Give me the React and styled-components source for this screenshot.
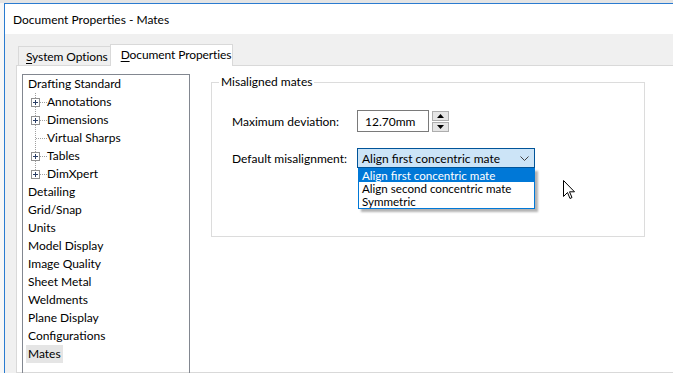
import React from 'react';
import styled, { createGlobalStyle } from 'styled-components';

const Global = createGlobalStyle`
  html, body { margin: 0; padding: 0; background: #fff; }
  body {
    font-family: Lato, "Noto Sans", sans-serif;
    font-size: 12px;
    color: #000;
  }
  * { box-sizing: border-box; }
`;

const Screen = styled.div`
  position: relative;
  width: 673px;
  height: 373px;
  overflow: hidden;
  display: flex;
  flex-direction: column;
  background: #fff;
`;

const TopBand = styled.div`
  height: 3px;
  flex: none;
  background: #e4e4e4;
`;

const Desk = styled.div`
  flex: 1;
  display: flex;
  padding-left: 4px;
  background: #f7f7f7;
  min-height: 0;
`;

const Window = styled.div`
  flex: 1;
  display: flex;
  flex-direction: column;
  border-left: 1px solid #2a7bd0;
  border-top: 1px solid #2a7bd0;
  min-height: 0;
`;

const TitleBar = styled.div`
  height: 30px;
  flex: none;
  display: flex;
  align-items: center;
  padding-left: 8px;
  background: #fff;
  font-size: 12px;
  color: #000;
`;

const Body = styled.div`
  flex: 1;
  display: flex;
  flex-direction: column;
  background: #f0f0f0;
  padding: 10px 0 0 11px;
  min-height: 0;
`;

const TabRow = styled.div`
  display: flex;
  align-items: flex-end;
  height: 21px;
  padding-left: 2px;
  flex: none;
`;

const Tab = styled.div`
  position: relative;
  z-index: 1;
  display: flex;
  align-items: center;
  height: ${p => (p.$active ? '22px' : '19px')};
  margin-bottom: ${p => (p.$active ? '-1px' : '0')};
  margin-left: ${p => (p.$active ? '-1px' : '0')};
  padding: ${p => (p.$active ? '0 1px 2px 10px' : '0 2px 0 7px')};
  background: ${p => (p.$active ? '#fff' : '#f0f0f0')};
  border: 1px solid #d9d9d9;
  border-bottom: none;
  white-space: nowrap;
  letter-spacing: -0.1px;
`;

const Ul = styled.span`
  text-decoration: underline;
  text-underline-offset: 2px;
`;

const Panel = styled.div`
  flex: 1;
  display: flex;
  align-items: flex-start;
  gap: 21px;
  background: #fff;
  border: 1px solid #d9d9d9;
  border-right: none;
  padding: 8px 0 0 5px;
  min-height: 0;
`;

const Tree = styled.div`
  width: 168px;
  height: 330px;
  flex: none;
  border: 1px solid #828790;
  padding: 0 0 0 5px;
  display: flex;
  flex-direction: column;
`;

const TreeRow = styled.div`
  height: 18px;
  display: flex;
  align-items: center;
  white-space: nowrap;
`;

const TreeLabel = styled.span`
  line-height: 18px;
  margin-left: ${p => (p.$selected ? '-2px' : '0')};
  padding: ${p => (p.$selected ? '0 2px' : '0')};
  background: ${p => (p.$selected ? '#e5e5e5' : 'transparent')};
`;

const Connector = ({ expandable, last }) => (
  <svg width="19" height="18" viewBox="0 0 19 18" style={{ flex: 'none' }}>
    <line x1="7.5" y1="0" x2="7.5" y2={last ? 9 : 18} stroke="#a0a0a0" strokeDasharray="1 1" />
    <line x1={expandable ? 12 : 8} y1="9.5" x2="19" y2="9.5" stroke="#a0a0a0" strokeDasharray="1 1" />
    {expandable && (
      <g>
        <rect x="3.5" y="5.5" width="8" height="8" fill="#fff" stroke="#919191" />
        <line x1="5" y1="9.5" x2="10" y2="9.5" stroke="#2b3f66" />
        <line x1="7.5" y1="7" x2="7.5" y2="12" stroke="#2b3f66" />
      </g>
    )}
  </svg>
);

const RightCol = styled.div`
  display: flex;
  flex-direction: column;
`;

const Group = styled.fieldset`
  width: 434px;
  margin: 0;
  padding: 0 0 68px 20px;
  border: 1px solid #dcdcdc;
  min-width: 0;
`;

const Legend = styled.legend`
  margin-left: -13px;
  padding: 0 2px;
  line-height: 16px;
`;

const FieldRow = styled.div`
  display: flex;
  align-items: center;
  height: ${p => p.$h}px;
  margin-top: ${p => p.$mt}px;
`;

const FieldLabel = styled.div`
  width: 125px;
  flex: none;
  white-space: nowrap;
`;

const NumInput = styled.div`
  width: 72px;
  height: 22px;
  border: 1px solid #7a7a7a;
  display: flex;
  align-items: center;
  padding-left: 7px;
  background: #fff;
`;

const Spinner = styled.div`
  margin-left: 3px;
  display: flex;
  flex-direction: column;
  gap: 1px;
  width: 17px;
`;

const SpinBtn = styled.div`
  height: 10px;
  background: #e5e5e5;
  border: 1px solid #adadad;
  display: flex;
  align-items: center;
  justify-content: center;
`;

const ComboWrap = styled.div`
  position: relative;
`;

const Combo = styled.div`
  width: 178px;
  height: 20px;
  display: flex;
  align-items: center;
  justify-content: space-between;
  padding: 0 5px 0 4px;
  background: #cce4f7;
  border: 1px solid #005499;
  white-space: nowrap;
`;

const DropList = styled.div`
  position: absolute;
  z-index: 5;
  top: 100%;
  left: 1px;
  width: 177px;
  background: #fff;
  border: 1px solid #0078d7;
  box-shadow: 3px 3px 2px rgba(0, 0, 0, 0.3);
  display: flex;
  flex-direction: column;
`;

const DropItem = styled.div`
  height: 13px;
  line-height: 13px;
  font-size: 11.6px;
  padding-left: 3px;
  white-space: nowrap;
  overflow: hidden;
  background: ${p => (p.$selected ? '#0078d7' : '#fff')};
  color: ${p => (p.$selected ? '#fff' : '#000')};
`;

const Cursor = styled.svg`
  position: absolute;
  left: 563px;
  top: 180px;
  z-index: 10;
`;

const Tri = ({ down }) => (
  <svg width="7" height="4" viewBox="0 0 7 4">
    <path d={down ? 'M0 0 H7 L3.5 4 Z' : 'M0 4 H7 L3.5 0 Z'} fill="#000" />
  </svg>
);

const children = [
  { name: 'Annotations', exp: true },
  { name: 'Dimensions', exp: true },
  { name: 'Virtual Sharps', exp: false },
  { name: 'Tables', exp: true },
  { name: 'DimXpert', exp: true },
];

const topItems = [
  'Detailing',
  'Grid/Snap',
  'Units',
  'Model Display',
  'Image Quality',
  'Sheet Metal',
  'Weldments',
  'Plane Display',
  'Configurations',
  'Mates',
];

export default function App() {
  return (
    <>
      <Global />
      <Screen>
        <TopBand />
        <Desk>
          <Window>
            <TitleBar>Document Properties - Mates</TitleBar>
            <Body>
              <TabRow>
                <Tab>
                  <span><Ul>S</Ul>ystem Options</span>
                </Tab>
                <Tab $active>
                  <span><Ul>D</Ul>ocument Properties</span>
                </Tab>
              </TabRow>
              <Panel>
                <Tree>
                  <TreeRow>
                    <TreeLabel>Drafting Standard</TreeLabel>
                  </TreeRow>
                  {children.map((c, i) => (
                    <TreeRow key={c.name}>
                      <Connector expandable={c.exp} last={i === children.length - 1} />
                      <TreeLabel>{c.name}</TreeLabel>
                    </TreeRow>
                  ))}
                  {topItems.map(n => (
                    <TreeRow key={n}>
                      <TreeLabel $selected={n === 'Mates'}>{n}</TreeLabel>
                    </TreeRow>
                  ))}
                </Tree>
                <RightCol>
                  <Group>
                    <Legend>Misaligned mates</Legend>
                    <FieldRow $h={22} $mt={20}>
                      <FieldLabel>Maximum deviation:</FieldLabel>
                      <NumInput>12.70mm</NumInput>
                      <Spinner>
                        <SpinBtn><Tri /></SpinBtn>
                        <SpinBtn><Tri down /></SpinBtn>
                      </Spinner>
                    </FieldRow>
                    <FieldRow $h={20} $mt={16}>
                      <FieldLabel>Default misalignment:</FieldLabel>
                      <ComboWrap>
                        <Combo>
                          <span>Align first concentric mate</span>
                          <svg width="9" height="5" viewBox="0 0 9 5">
                            <path d="M0.5 0.5 L4.5 4.5 L8.5 0.5" fill="none" stroke="#404040" strokeWidth="1" />
                          </svg>
                        </Combo>
                        <DropList>
                          <DropItem $selected>Align first concentric mate</DropItem>
                          <DropItem>Align second concentric mate</DropItem>
                          <DropItem>Symmetric</DropItem>
                        </DropList>
                      </ComboWrap>
                    </FieldRow>
                  </Group>
                </RightCol>
              </Panel>
            </Body>
          </Window>
        </Desk>
        <Cursor width="13" height="20" viewBox="0 0 13 20">
          <path d="M0.5 0.5 L0.5 16.5 L4.5 12.5 L7 18.5 L9 17.5 L6.5 11.8 L11.5 11.8 Z" fill="#fff" stroke="#000" strokeWidth="1" strokeLinejoin="miter" />
        </Cursor>
      </Screen>
    </>
  );
}
